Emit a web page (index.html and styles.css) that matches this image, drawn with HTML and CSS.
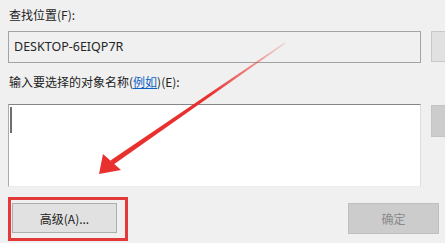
FILE: index.html
```html
<!DOCTYPE html>
<html lang="zh-CN">
<head>
  <meta charset="UTF-8" />
  <title>选择用户或组</title>
  <link rel="stylesheet" href="styles.css">
</head>
<body>

  <div class="dialog">
    <label class="field-label">查找位置(F):</label>
    <div class="field-row">
      <div class="location-box">DESKTOP-6EIQP7R</div>
      <button class="side-btn"></button>
    </div>

    <label class="field-label second">输入要选择的对象名称(<a href="#">例如</a>)(E):</label>
    <div class="field-row tall">
      <div class="names-box"><span class="caret"></span></div>
      <button class="side-btn disabled"></button>
    </div>

    <div class="footer">
      <div class="highlight">
        <button class="btn">高级(A)...</button>
      </div>
      <button class="btn ok" disabled>确定</button>
    </div>
  </div>

  <!-- annotation arrow drawn over the dialog -->
  <svg class="arrow" width="445" height="243" viewBox="0 0 445 243">
    <defs>
      <linearGradient id="fade" gradientUnits="userSpaceOnUse" x1="286" y1="42" x2="210" y2="96">
        <stop offset="0" stop-color="#e8312f" stop-opacity="0.15"/>
        <stop offset="1" stop-color="#e8312f" stop-opacity="1"/>
      </linearGradient>
    </defs>
    <polygon points="285.4,43.4 284.6,42.6 110.4,160.4 113.6,164.6" fill="url(#fade)"/>
    <polygon points="99,174 103,154 121,170" fill="#e8312f"/>
  </svg>

</body>
</html>
```

FILE: styles.css
```css
* {
  box-sizing: border-box;
}

body {
  margin: 0;
  width: 445px;
  height: 243px;
  overflow: hidden;
  background: #f0f0f0;
  font-family: "Noto Sans CJK SC", "Noto Sans", sans-serif;
  font-size: 12px;
  color: #222;
  position: relative;
}

.dialog {
  display: flex;
  flex-direction: column;
  padding: 7px 0 0 8px;
}

.field-label {
  display: block;
  line-height: 16px;
  height: 16px;
  padding-left: 1px;
}

.field-label.second {
  margin-top: 11px;
}

.field-label a {
  color: #0a64c8;
  text-decoration: underline;
}

.field-row {
  display: flex;
  gap: 10px;
  margin-top: 8px;
}

.field-row.tall {
  margin-top: 14px;
}

.location-box {
  width: 413px;
  height: 32px;
  border: 1px solid #a3a3a3;
  background: #f0f0f0;
  padding: 0 5px;
  line-height: 30px;
  font-family: "Noto Sans", sans-serif;
  font-size: 12.5px;
  color: #262626;
}

.side-btn {
  width: 14px;
  height: 31px;
  border: 1px solid #c9c9c9;
  border-right: none;
  background: #e1e1e1;
  padding: 0;
}

.side-btn.disabled {
  height: 32px;
  margin-top: 1px;
  background: #cccccc;
  border-color: #c4c4c4;
}

.names-box {
  width: 413px;
  height: 83px;
  background: #fff;
  border-top: 1px solid #858585;
  border-left: 1px solid #ababab;
  border-right: 1px solid #dedede;
  border-bottom: 1px solid #ececec;
  padding: 2px 0 0 1px;
}

.caret {
  display: block;
  width: 2px;
  height: 26px;
  background: #6e6e6e;
}

.footer {
  display: flex;
  justify-content: space-between;
  align-items: flex-start;
  margin-top: 10px;
  padding-right: 6px;
}

.highlight {
  width: 120px;
  height: 44px;
  border: 3px solid #e23a3a;
  padding: 3px 0 0 1px;
}

.btn {
  width: 105px;
  height: 30px;
  background: #e1e1e1;
  border: 1px solid #adadad;
  font-family: "Noto Sans CJK SC", "Noto Sans", sans-serif;
  font-size: 12px;
  color: #222;
  padding: 0;
}

.btn.ok {
  width: 91px;
  height: 31px;
  margin-top: 6px;
  background: #cccccc;
  border-color: #bfbfbf;
  color: #8a8a8a;
}

.arrow {
  position: absolute;
  top: 0;
  left: 0;
  pointer-events: none;
}
```
